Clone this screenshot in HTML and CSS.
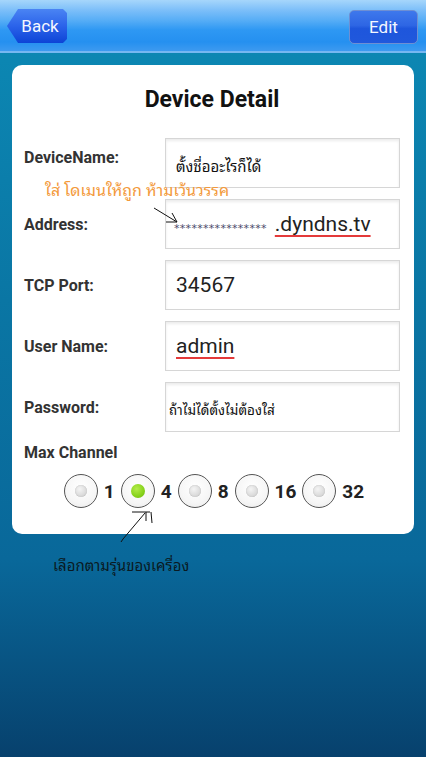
FILE: index.html
```html
<!DOCTYPE html>
<html>
<head>
<meta charset="utf-8">
<link rel="stylesheet" href="styles.css">
</head>
<body>
<div class="screen">
  <header class="topbar">
    <div class="btn-back">Back</div>
    <div class="btn-edit">Edit</div>
  </header>

  <section class="card">
    <h1 class="title">Device Detail</h1>

    <div class="row row-first">
      <div class="label">DeviceName:</div>
      <div class="field"><span class="thai-val">ตั้งชื่ออะไรก็ได้</span></div>
    </div>
    <div class="row">
      <div class="label">Address:</div>
      <div class="field"><span class="stars">****************</span><span class="big spell">.dyndns.tv</span></div>
    </div>
    <div class="row">
      <div class="label">TCP Port:</div>
      <div class="field"><span class="big">34567</span></div>
    </div>
    <div class="row">
      <div class="label">User Name:</div>
      <div class="field"><span class="big spell">admin</span></div>
    </div>
    <div class="row">
      <div class="label">Password:</div>
      <div class="field field-tight"><span class="thai-val small">ถ้าไม่ได้ตั้งไม่ต้องใส่</span></div>
    </div>

    <div class="label label-max">Max Channel</div>
    <div class="radios">
      <div class="radio"><span class="dot"></span></div><span class="rlabel">1</span>
      <div class="radio on"><span class="dot"></span></div><span class="rlabel">4</span>
      <div class="radio"><span class="dot"></span></div><span class="rlabel">8</span>
      <div class="radio"><span class="dot"></span></div><span class="rlabel">16</span>
      <div class="radio"><span class="dot"></span></div><span class="rlabel">32</span>
    </div>

    <div class="note-orange">ใส่ โดเมนให้ถูก ห้ามเว้นวรรค</div>
    <svg class="arrow-addr" width="30" height="20" viewBox="0 0 30 20">
      <path d="M1 1 L24 15 M19 6 L24 15 L13 15" fill="none" stroke="#111" stroke-width="1"/>
    </svg>
  </section>

  <svg class="arrow-radio" width="40" height="40" viewBox="0 0 40 40">
    <path d="M1 35 L3 32 L25 6 M12 5 L30 5 M26 5 L26 14 M31 5 L32 16" fill="none" stroke="#111" stroke-width="1"/>
  </svg>
  <div class="note-dark">เลือกตามรุ่นของเครื่อง</div>
</div>
</body>
</html>
```

FILE: styles.css
```css
html, body {
  margin: 0;
  padding: 0;
}
body {
  width: 426px;
  height: 757px;
  overflow: hidden;
  font-family: Roboto, "Noto Sans", "Liberation Sans", sans-serif;
}
.screen {
  position: relative;
  width: 426px;
  height: 757px;
  background: linear-gradient(to bottom, #0d88b4 0px, #0c86b2 60px, #0a76a4 300px, #09689a 560px, #07416d 757px);
}
.topbar {
  height: 51px;
  display: flex;
  justify-content: space-between;
  align-items: center;
  padding: 0 8px 0 7px;
  background: linear-gradient(to bottom, #a6d6fb 0px, #7dbff9 10px, #58aef6 20px, #2e98f3 30px, #2590f0 42px, #3d9af0 51px);
  border-bottom: 2px solid #76b7f1;
  box-sizing: content-box;
}
.btn-back {
  width: 60px;
  height: 34px;
  margin-top: 1px;
  display: flex;
  align-items: center;
  justify-content: center;
  padding-left: 6px;
  box-sizing: border-box;
  color: #f4f7ff;
  font-size: 17px;
  background: linear-gradient(to bottom, #4a84f3 0%, #2b63ea 50%, #0d44d6 100%);
  clip-path: polygon(11px 0, 56px 0, 60px 4px, 60px 30px, 56px 34px, 11px 34px, 0 17px);
  border-radius: 0 4px 4px 0;
}
.btn-edit {
  width: 67px;
  height: 32px;
  margin-top: 2px;
  border: 1px solid #6e8fd3;
  border-radius: 5px;
  display: flex;
  align-items: center;
  justify-content: center;
  color: #f4f7ff;
  font-size: 17px;
  background: linear-gradient(to bottom, #3e78ec 0%, #2e66e4 45%, #1e56dc 55%, #2058dc 100%);
}
.card {
  position: relative;
  margin: 12px 12px 0 12px;
  height: 469px;
  background: #fff;
  border-radius: 10px;
  padding: 20px 14px 0 12px;
  box-sizing: border-box;
}
.title {
  margin: 0 0 23px 0;
  height: 30px;
  line-height: 30px;
  text-align: center;
  font-size: 23px;
  font-weight: bold;
  color: #111;
}
.row {
  display: flex;
  align-items: center;
  height: 50px;
  margin-bottom: 11px;
}
.label {
  width: 141px;
  font-size: 16px;
  font-weight: bold;
  color: #333;
}
.row-first .label {
  padding-bottom: 12px;
}
.field {
  width: 235px;
  height: 50px;
  box-sizing: border-box;
  border: 1px solid #d6d6d6;
  box-shadow: inset 0 2px 3px rgba(0,0,0,0.08);
  background: #fff;
  display: flex;
  align-items: center;
  padding-left: 10px;
  color: #111;
}
.field-tight {
  padding-left: 3px;
}
.thai-val {
  font-family: "Noto Sans Thai Looped", Loma, Garuda, Waree, Tahoma, "Noto Sans Thai", sans-serif;
  font-size: 15px;
  color: #111;
}
.thai-val.small {
  font-size: 13.5px;
  padding-top: 4px;
}
.row-first .thai-val {
  padding-top: 4px;
}
.big {
  font-size: 21px;
  color: #222;
  font-family: Roboto, "Noto Sans", sans-serif;
}
.spell {
  text-decoration: underline;
  text-decoration-color: #e43a3a;
  text-decoration-thickness: 2px;
  text-underline-offset: 4px;
}
.stars {
  font-size: 11px;
  letter-spacing: 0.3px;
  color: #4b4a6a;
  margin-left: -2px;
  margin-right: 8px;
  padding-top: 8px;
  font-family: "DejaVu Sans", sans-serif;
}
.label-max {
  width: auto;
  margin-top: 8px;
  height: 20px;
  line-height: 20px;
}
.radios {
  display: flex;
  align-items: center;
  justify-content: center;
  margin-top: 11px;
  padding-left: 4px;
  gap: 6px;
}
.radio {
  width: 32px;
  height: 32px;
  border: 1.5px solid #555;
  border-radius: 50%;
  background: radial-gradient(circle at 50% 40%, #ffffff 0%, #f6f6f6 60%, #e8e8e8 100%);
  display: flex;
  align-items: center;
  justify-content: center;
}
.dot {
  width: 12px;
  height: 12px;
  border-radius: 50%;
  background: radial-gradient(circle at 40% 35%, #f4f4f4 0%, #d7d7d7 70%, #c4c4c4 100%);
  box-shadow: inset 0 0 1px #aaa;
}
.radio.on .dot {
  width: 14px;
  height: 14px;
  background: radial-gradient(circle at 40% 35%, #b4ec4a 0%, #86d21b 60%, #6cb10f 100%);
  box-shadow: none;
}
.rlabel {
  font-size: 19px;
  font-weight: bold;
  color: #222;
}
.note-orange {
  position: absolute;
  left: 33px;
  top: 111px;
  font-family: "Noto Sans Thai Looped", Loma, Garuda, Waree, Tahoma, "Noto Sans Thai", sans-serif;
  font-size: 16px;
  color: #f39a3c;
}
.arrow-addr {
  position: absolute;
  left: 141px;
  top: 142px;
}
.arrow-radio {
  position: absolute;
  left: 120px;
  top: 507px;
}
.note-dark {
  position: absolute;
  left: 53px;
  top: 552px;
  font-family: "Noto Sans Thai Looped", Loma, Garuda, Waree, Tahoma, "Noto Sans Thai", sans-serif;
  font-size: 15px;
  color: #0a1a22;
}
```
